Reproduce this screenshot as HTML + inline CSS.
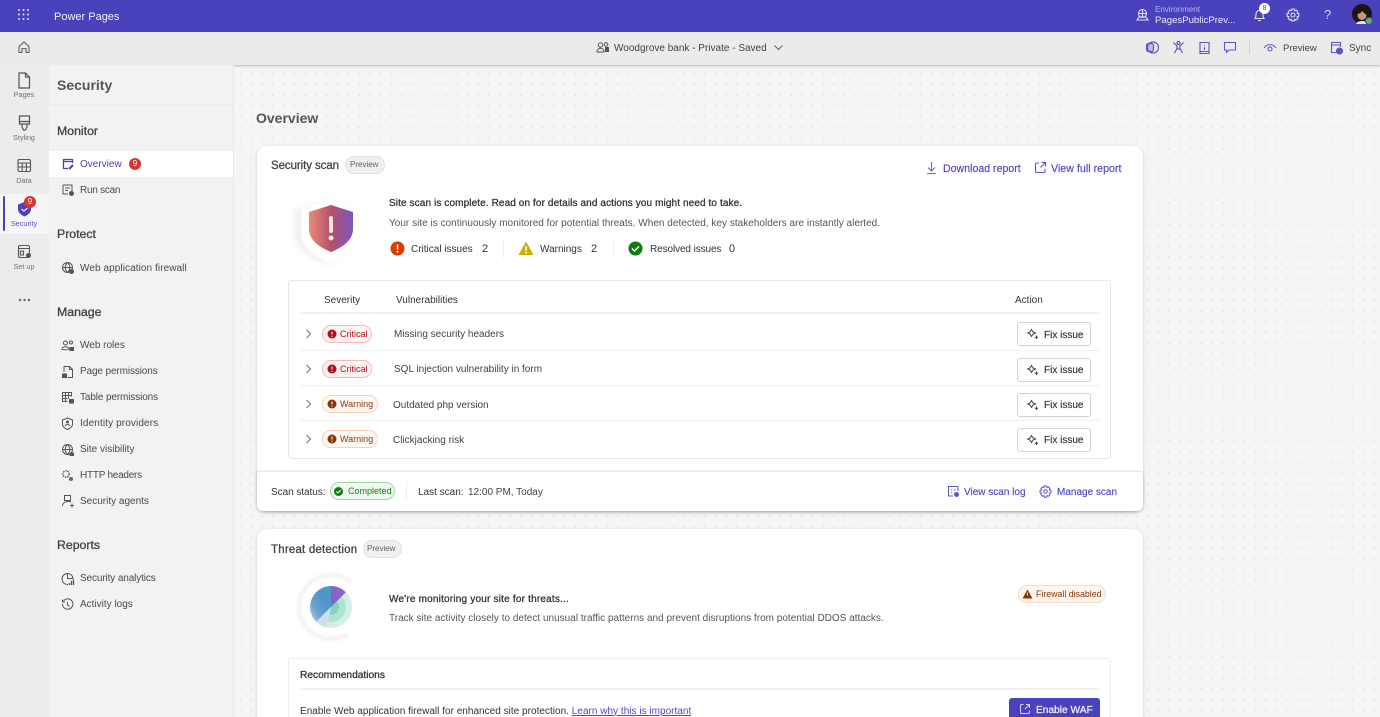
<!DOCTYPE html>
<html lang="en"><head><meta charset="utf-8"><title>Power Pages - Security</title>
<style>
*{box-sizing:border-box}
html,body{margin:0;padding:0;width:1380px;height:717px;overflow:hidden;background:#f5f5f5;font-family:"Liberation Sans",sans-serif;color:#424242}
#r{position:absolute;left:0;top:0;width:1380px;height:717px;overflow:hidden;filter:blur(.35px)}
.a,.t{position:absolute}
.t{white-space:nowrap;font-size:10px;line-height:14px;height:14px;color:#424242}
.b{font-weight:bold}
.sb{-webkit-text-stroke:.28px currentColor}
.nav{font-size:10px;color:#4a4a4a}
.h{font-size:12.3px;color:#424242;-webkit-text-stroke:.3px #424242}
.rail{font-size:7.3px;color:#707070;text-align:center;width:48px;left:0}
.link{color:#4f46c8;font-size:10px;-webkit-text-stroke:.15px #4f46c8}
svg{position:absolute;overflow:visible}
.pill{position:absolute;border-radius:9px;border:1px solid;height:18px}
.btn{position:absolute;left:1017px;width:74px;height:24px;background:#fff;border:1px solid #d1d1d1;border-radius:3px}
.sep{position:absolute;height:1px;background:#f0f0f0;left:300px;width:800px}
</style></head><body><div id="r">
<!-- dotted canvas -->
<div class="a" style="left:234px;top:66px;width:1146px;height:651px;background-color:#f5f5f5;background-image:radial-gradient(circle,#e2e5f3 0.9px,transparent 1.2px);background-size:10.8px 10.8px;background-position:1px 2px"></div>
<!-- top bar -->
<div class="a" style="left:0;top:0;width:1380px;height:32px;background:#4a41bd"></div>
<svg style="left:17px;top:8px" width="14" height="14" fill="#e6e4f7"><circle cx="2" cy="2" r="1"/><circle cx="6.500" cy="2" r="1"/><circle cx="11" cy="2" r="1"/><circle cx="2" cy="6.500" r="1"/><circle cx="6.500" cy="6.500" r="1"/><circle cx="11" cy="6.500" r="1"/><circle cx="2" cy="11" r="1"/><circle cx="6.500" cy="11" r="1"/><circle cx="11" cy="11" r="1"/></svg>
<div class="t" style="left:54px;top:9.500px;font-size:11px;color:#f2f1fb">Power Pages</div>
<svg style="left:1136px;top:8px" width="14" height="14" fill="none" stroke="#e6e4f7" stroke-width="1.100"><circle cx="6.500" cy="5.500" r="4"/><path d="M2.500 5.500h8M6.500 1.500v8M1 12l2-3h7l2 3z"/></svg>
<div class="t" style="left:1155px;top:3px;font-size:8px;color:#b9b5e8">Environment</div>
<div class="t" style="left:1155px;top:14px;font-size:9.600px;color:#ebeafa">PagesPublicPrev...</div>
<svg style="left:1253px;top:8px" width="14" height="14" fill="none" stroke="#e6e4f7" stroke-width="1.100"><path d="M2 10.500c1-1 1-2 1-4.500a3.500 3.500 0 0 1 7 0c0 2.500 0 3.500 1 4.500zM5 12.500h3"/></svg>
<div class="a" style="left:1259px;top:3px;width:11px;height:11px;border-radius:50%;background:#fff;color:#4a41bd;font-size:7px;line-height:11px;text-align:center">8</div>
<svg style="left:1286px;top:8px" width="14" height="14" fill="none" stroke="#e6e4f7" stroke-width="1.100"><circle cx="7" cy="7" r="2"/><path d="M5.800 1h2.400l.4 1.700 1.600-.7 1.700 1.700-.8 1.500 1.700.6v2.400l-1.700.6.800 1.500-1.700 1.700-1.600-.7-.4 1.700H5.800l-.4-1.700-1.600.7-1.700-1.700.8-1.500-1.700-.6V5.800l1.700-.6-.8-1.500L3.800 2l1.600.7z"/></svg>
<div class="t" style="left:1324px;top:7px;font-size:13px;line-height:16px;height:16px;color:#d9d6f3">?</div>
<svg style="left:1352px;top:4px" width="22" height="22"><circle cx="10" cy="10" r="10" fill="#1d1512"/><ellipse cx="10" cy="11" rx="4.500" ry="5" fill="#c99378"/><path d="M4 10c0-6 5-7 8-6s4 4 3 7c-2-1-4-3-5-4-1 2-3 3-6 3z" fill="#1d1512"/><path d="M4 20c1-4 11-4 12 0z" fill="#e8e0dc"/><circle cx="17" cy="17" r="3.500" fill="#5cb84f" stroke="#4a41bd"/></svg>
<!-- command bar -->
<div class="a" style="left:0;top:32px;width:1380px;height:33px;background:#edebe9;box-shadow:0 1px 2px rgba(0,0,0,.25)"></div>
<svg style="left:17px;top:40px" width="14" height="14" fill="none" stroke="#616161" stroke-width="1.100"><path d="M2 6.500 7 2l5 4.500V12.500H9V8.500H5v4H2z"/></svg>
<svg style="left:596px;top:41px" width="14" height="13" fill="none" stroke="#555" stroke-width="1"><circle cx="4.500" cy="4" r="2.200"/><path d="M1 11c0-5 7-5 7 0z"/><circle cx="10" cy="3.500" r="1.800"/><path d="M9.500 6.500h3v4h-3z" fill="#555"/></svg>
<div class="t" style="left:614px;top:42px;color:#424242">Woodgrove bank - Private - Saved</div>
<svg style="left:773px;top:44px" width="11" height="8" fill="none" stroke="#616161"><path d="M1.500 1.500 5.500 5.500 9.500 1.500"/></svg>
<svg style="left:1145px;top:40px" width="15" height="15" fill="none" stroke="#5b55c9" stroke-width="1.200"><circle cx="8" cy="7.500" r="5.500"/><rect x="1.500" y="3.500" width="7" height="8" rx="2" fill="#5b55c9" fill-opacity=".3"/></svg>
<svg style="left:1172px;top:40px" width="14" height="15" fill="none" stroke="#5b55c9" stroke-width="1.200"><circle cx="6.500" cy="3" r="1.500"/><path d="M1.500 2.500 5 6v2.500L2.500 13M11.500 2.500 8 6v2.500l2.500 4.500M5 9h3"/></svg>
<svg style="left:1198px;top:41px" width="13" height="14" fill="none" stroke="#5b55c9" stroke-width="1.100"><path d="M2 1.500h9v11H2zM2 10.500h9M6.500 4v.8M6.500 6v3"/></svg>
<svg style="left:1223px;top:41px" width="14" height="13" fill="none" stroke="#5b55c9" stroke-width="1.100"><path d="M1.500 1.500h11v7.500H6L3.500 11.500V9h-2z"/></svg>
<div class="a" style="left:1249px;top:41px;width:1px;height:13px;background:#d1d1d1"></div>
<svg style="left:1263px;top:42px" width="14" height="11" fill="none" stroke="#5b55c9" stroke-width="1.100"><path d="M1 6C4 1.500 10 1.500 13 6"/><circle cx="7" cy="7" r="2"/></svg>
<div class="t" style="left:1283px;top:42px;font-size:9.500px;color:#424242">Preview</div>
<svg style="left:1330px;top:41px" width="14" height="14" fill="none" stroke="#5b55c9" stroke-width="1.100"><path d="M7 11.500H1.500V1.500h9V6M1.500 4h9"/><circle cx="9.500" cy="10" r="3" fill="#5b55c9"/></svg>
<div class="t" style="left:1349px;top:42px;color:#424242">Sync</div>
<!-- rail -->
<div class="a" style="left:0;top:65px;width:49px;height:652px;background:#ececec"></div>
<div class="a" style="left:0;top:194px;width:49px;height:40px;background:#f5f5f5"></div>
<div class="a" style="left:3px;top:196px;width:2px;height:35px;background:#4a41bd;border-radius:1px"></div>
<svg style="left:17px;top:72px" width="14" height="17" fill="none" stroke="#555" stroke-width="1.200"><path d="M2 1h6.500L12.500 5v11H2zM8.500 1v4h4"/></svg>
<div class="t rail" style="top:88px">Pages</div>
<svg style="left:18px;top:115px" width="13" height="16" fill="none" stroke="#555" stroke-width="1.200"><path d="M1.500 1h10v8h-10zM1.500 6.500h10M4 9h5v3l-1.500 3h-2L4 12z"/></svg>
<div class="t rail" style="top:131px">Styling</div>
<svg style="left:17px;top:158px" width="15" height="15" fill="none" stroke="#555" stroke-width="1.100"><rect x="1" y="1.500" width="12.500" height="12" rx="1.500"/><path d="M1 5h12.500M1 9h12.500M5.200 5v8.500M9.400 5v8.500"/></svg>
<div class="t rail" style="top:174px">Data</div>
<svg style="left:17px;top:201px" width="15" height="16"><path d="M7.500 1 14 3.500v4.500c0 3.500-3 6-6.500 7.500C4 14 1 11.500 1 8V3.500z" fill="#4a41bd"/><path d="M4.500 8 7 10l3.500-3" stroke="#fff" fill="none" stroke-width="1.100"/></svg>
<div class="a" style="left:24px;top:196px;width:12px;height:12px;border-radius:50%;background:#d13a2e;color:#fff;font-size:8px;line-height:12px;text-align:center">9</div>
<div class="t rail" style="top:217px;color:#5b55c9">Security</div>
<svg style="left:17px;top:244px" width="15" height="16" fill="none" stroke="#555" stroke-width="1.100"><rect x="1.500" y="1.500" width="11" height="12" rx="1.500"/><path d="M1.500 4.500h11M3.500 7h3v4h-3z"/><circle cx="11.500" cy="11.500" r="2.500" fill="#555" stroke="none"/></svg>
<div class="t rail" style="top:260px">Set up</div>
<svg style="left:18px;top:298px" width="13" height="4" fill="#666"><circle cx="2" cy="2" r="1.200"/><circle cx="6.500" cy="2" r="1.200"/><circle cx="11" cy="2" r="1.200"/></svg>
<!-- left panel -->
<div class="a" style="left:49px;top:65px;width:184px;height:652px;background:#f2f2f2"></div>
<div class="a" style="left:233px;top:65px;width:1px;height:652px;background:#e6e6e6"></div>
<div class="a" style="left:49px;top:104px;width:184px;height:2px;background:#ebebeb"></div>
<div class="t b" style="left:57px;top:76px;font-size:14px;line-height:18px;height:18px;color:#555">Security</div>
<div class="t h" style="left:57px;top:124px">Monitor</div>
<div class="a" style="left:49px;top:151px;width:184px;height:26px;background:#fff"></div>
<svg style="left:61px;top:157px" width="14" height="14" fill="none" stroke="#4a41bd" stroke-width="1.300"><path d="M11.500 6V2.500H2.500v9H7M2.500 4.500h9"/><path d="M8 12l4-4" stroke-width="2"/></svg>
<div class="t" style="left:80px;top:158px;color:#4a41bd">Overview</div>
<div class="a" style="left:129px;top:158px;width:12px;height:12px;border-radius:50%;background:#d13a2e;color:#fff;font-size:8px;line-height:12px;text-align:center">9</div>
<svg style="left:61px;top:183px" width="14" height="14" fill="none" stroke="#555"><path d="M2 2h9v8M2 2v9h5M4 5h5M4 7.500h3"/><circle cx="10.500" cy="10.500" r="2.500" fill="#555" stroke="none"/></svg>
<div class="t nav" style="left:80px;top:184px;letter-spacing:-.25px">Run scan</div>
<div class="t h" style="left:57px;top:227px">Protect</div>
<svg style="left:61px;top:261px" width="14" height="14" fill="none" stroke="#555"><circle cx="6.500" cy="6.500" r="5"/><path d="M1.500 6.500h10M6.500 1.500c-3 3-3 7 0 10M6.500 1.500c3 3 3 7 0 10"/><circle cx="10.500" cy="10.500" r="2.500" fill="#555" stroke="none"/></svg>
<div class="t nav" style="left:80px;top:262px;letter-spacing:.08px">Web application firewall</div>
<div class="t h" style="left:57px;top:305px">Manage</div>
<svg style="left:61px;top:339px" width="14" height="14" fill="none" stroke="#555"><circle cx="4.500" cy="4" r="2"/><path d="M1 10c0-3 7-3 7 0 0 1-7 1-7 0z"/><circle cx="10" cy="3.500" r="1.500"/><rect x="8.500" y="8" width="4.500" height="4" fill="#555" stroke="none"/></svg>
<div class="t nav" style="left:80px;top:339px">Web roles</div>
<svg style="left:61px;top:365px" width="14" height="14" fill="none" stroke="#555"><path d="M3 7V1.500h5.500l3 3V12.500H7M8.500 1.500v3h3"/><rect x="1" y="8.500" width="5" height="4.500" fill="#555" stroke="none"/></svg>
<div class="t nav" style="left:80px;top:365px;letter-spacing:-.12px">Page permissions</div>
<svg style="left:61px;top:391px" width="14" height="14" fill="none" stroke="#555"><path d="M1.500 1.500h9v4M1.500 1.500v9h5M1.500 4.500h9M1.500 7.500h5M4.500 1.500v9M7.500 1.500v6"/><rect x="8" y="8" width="5" height="4.500" fill="#555" stroke="none"/></svg>
<div class="t nav" style="left:80px;top:391px;letter-spacing:-.12px">Table permissions</div>
<svg style="left:61px;top:417px" width="14" height="14" fill="none" stroke="#555"><path d="M6.500 1 11.500 3v4c0 3-2.500 4.500-5 5.500-2.500-1-5-2.500-5-5.500V3z"/><circle cx="6.500" cy="5" r="1.500" fill="#555" stroke="none"/><path d="M4 9c1-2 4-2 5 0"/></svg>
<div class="t nav" style="left:80px;top:417px;letter-spacing:.12px">Identity providers</div>
<svg style="left:61px;top:443px" width="14" height="14" fill="none" stroke="#555"><circle cx="6.500" cy="6.500" r="5"/><path d="M1.500 6.500h10M6.500 1.500c-3 3-3 7 0 10M6.500 1.500c3 3 3 7 0 10"/><rect x="8.500" y="9.500" width="4.500" height="3.500" fill="#555" stroke="none"/></svg>
<div class="t nav" style="left:80px;top:443px">Site visibility</div>
<svg style="left:61px;top:469px" width="14" height="14" fill="none" stroke="#666"><circle cx="5" cy="5" r="3.200" stroke-dasharray="1.500 .8" stroke-width="1.500"/><circle cx="10" cy="10" r="2" fill="#666" stroke="none"/></svg>
<div class="t nav" style="left:80px;top:469px;letter-spacing:-.25px">HTTP headers</div>
<svg style="left:61px;top:494px" width="14" height="14" fill="none" stroke="#555"><path d="M3.500 1.500h6v5h-6zM1.500 12c0-4 5-5.500 8.500-4"/><path d="M11 9.500v4M9 11.500h4"/></svg>
<div class="t nav" style="left:80px;top:495px">Security agents</div>
<div class="t h" style="left:57px;top:538px">Reports</div>
<svg style="left:61px;top:572px" width="14" height="14" fill="none" stroke="#555"><path d="M7 12.500A5.500 5.500 0 1 1 12 6.500H6.500V1"/><path d="M8.500 13V11M10.500 13V9M12.500 13V7.500" stroke-width="1.300"/></svg>
<div class="t nav" style="left:80px;top:572px;letter-spacing:-.12px">Security analytics</div>
<svg style="left:61px;top:598px" width="14" height="14" fill="none" stroke="#555"><path d="M2.500 3a5.200 5.200 0 1 1-1 3M1.500 1.500V4h2.500M6.500 4v3l2 1.500"/></svg>
<div class="t nav" style="left:80px;top:598px">Activity logs</div>
<!-- main -->
<div class="t b" style="left:256px;top:109px;font-size:14px;line-height:18px;height:18px;color:#555">Overview</div>
<!-- card 1 -->
<div class="a" style="left:257px;top:146px;width:886px;height:365px;background:#fff;border-radius:10px;box-shadow:0 1px 3px rgba(0,0,0,.18)"></div>
<div class="t sb" style="left:271px;top:159px;font-size:11.500px;letter-spacing:-.08px;color:#424242">Security scan</div>
<div class="pill" style="left:345px;top:156px;width:40px;background:#f0f0f0;border-color:#e0e0e0"></div>
<div class="t" style="left:350px;top:158px;font-size:8px;color:#616161">Preview</div>
<svg style="left:926px;top:161px" width="11" height="14" fill="none" stroke="#6b65d0" stroke-width="1.100"><path d="M5.500 1v9M2 6.500l3.500 3.500L9 6.500M1 12.500h9"/></svg>
<div class="t link" style="left:943px;top:162px;font-size:10.600px">Download report</div>
<svg style="left:1034px;top:161px" width="13" height="13" fill="none" stroke="#5b55c9" stroke-width="1.100"><path d="M5 2H2.500a1 1 0 0 0-1 1v7.500a1 1 0 0 0 1 1H10a1 1 0 0 0 1-1V8M7.500 1.500h4v4M11.500 1.500 6.500 6.500"/></svg>
<div class="t link" style="left:1051px;top:162px;font-size:10.700px">View full report</div>
<!-- shield -->
<svg style="left:290px;top:196px" width="76" height="76"><defs><linearGradient id="sg" x1="0" y1="0" x2="1" y2="0"><stop offset="0" stop-color="#e88d75"/><stop offset=".5" stop-color="#b4506c"/><stop offset="1" stop-color="#7d57c2"/></linearGradient><filter id="sb"><feGaussianBlur stdDeviation="3"/></filter><filter id="sw"><feGaussianBlur stdDeviation="1"/></filter></defs><path d="M38 4 66 14v24c0 15-14 25-29 30C22 63 5 53 5 38V14z" fill="#dedede" fill-opacity=".5" filter="url(#sb)"/><path d="M41 3 70 13v24c0 15-14 25-29 30C26 62 11 52 11 37V13z" fill="#fff" filter="url(#sw)"/><path d="M41 9 63 16V33c0 12-12 19-22 23C31 52 19 45 19 33V16z" fill="url(#sg)"/><rect x="39" y="20" width="4" height="17" rx="2" fill="#f8e4e4"/><circle cx="41" cy="42" r="2.500" fill="#f8e4e4"/></svg>
<div class="t sb" style="left:389px;top:197px;color:#333;letter-spacing:.11px">Site scan is complete. Read on for details and actions you might need to take.</div>
<div class="t" style="left:389px;top:216.500px;color:#555;letter-spacing:.02px">Your site is continuously monitored for potential threats. When detected, key stakeholders are instantly alerted.</div>
<svg style="left:390px;top:241px" width="15" height="15"><circle cx="7.500" cy="7.500" r="7" fill="#d83b01"/><path d="M7.500 3.500v5" stroke="#fff" stroke-width="1.500"/><circle cx="7.500" cy="10.800" r="1" fill="#fff"/></svg>
<div class="t" style="left:411px;top:242.500px;color:#333">Critical issues</div>
<div class="t" style="left:482px;top:242px;font-size:11px;color:#333">2</div>
<div class="a" style="left:503px;top:239px;width:1px;height:19px;background:#eee"></div>
<svg style="left:518px;top:241px" width="16" height="15"><path d="M8 .5 15.500 14H.5z" fill="#c4b000"/><path d="M8 5v5" stroke="#fff" stroke-width="1.400"/><circle cx="8" cy="11.800" r=".9" fill="#fff"/></svg>
<div class="t" style="left:540px;top:242.500px;color:#333">Warnings</div>
<div class="t" style="left:591px;top:242px;font-size:11px;color:#333">2</div>
<div class="a" style="left:613px;top:239px;width:1px;height:19px;background:#eee"></div>
<svg style="left:628px;top:241px" width="15" height="15"><circle cx="7.500" cy="7.500" r="7" fill="#107c10"/><path d="M4 7.500l2.500 2.500 4.500-4.500" fill="none" stroke="#fff" stroke-width="1.400"/></svg>
<div class="t" style="left:650px;top:242.500px;color:#333;letter-spacing:-.1px">Resolved issues</div>
<div class="t" style="left:729px;top:242px;font-size:11px;color:#333">0</div>
<!-- table -->
<div class="a" style="left:288px;top:280px;width:823px;height:179px;border:1px solid #e8e8e8;border-radius:3px;background:#fff"></div>
<div class="t" style="left:324px;top:293.500px;color:#333">Severity</div>
<div class="t" style="left:396px;top:293.500px;color:#333">Vulnerabilities</div>
<div class="t" style="left:1015px;top:293.500px;color:#333">Action</div>
<div class="sep" style="top:312px;height:2px"></div>
<div class="sep" style="top:350px"></div>
<div class="sep" style="top:385px"></div>
<div class="sep" style="top:420px"></div>
<svg style="left:305px;top:329px" width="7" height="10" fill="none" stroke="#707070"><path d="M1.500 1 5.500 5 1.500 9"/></svg>
<svg style="left:305px;top:364px" width="7" height="10" fill="none" stroke="#707070"><path d="M1.500 1 5.500 5 1.500 9"/></svg>
<svg style="left:305px;top:399px" width="7" height="10" fill="none" stroke="#707070"><path d="M1.500 1 5.500 5 1.500 9"/></svg>
<svg style="left:305px;top:434px" width="7" height="10" fill="none" stroke="#707070"><path d="M1.500 1 5.500 5 1.500 9"/></svg>
<div class="pill" style="left:322px;top:325px;width:50px;background:#fdf3f4;border-color:#f1bbbc"></div>
<svg style="left:327px;top:329px" width="10" height="10"><circle cx="5" cy="5" r="4.500" fill="#b10e1c"/><path d="M5 2.500v3" stroke="#fff"/><circle cx="5" cy="7.200" r=".6" fill="#fff"/></svg>
<div class="t" style="left:340px;top:327px;font-size:9px;color:#b10e1c">Critical</div>
<div class="pill" style="left:322px;top:360px;width:50px;background:#fdf3f4;border-color:#f1bbbc"></div>
<svg style="left:327px;top:364px" width="10" height="10"><circle cx="5" cy="5" r="4.500" fill="#b10e1c"/><path d="M5 2.500v3" stroke="#fff"/><circle cx="5" cy="7.200" r=".6" fill="#fff"/></svg>
<div class="t" style="left:340px;top:362px;font-size:9px;color:#b10e1c">Critical</div>
<div class="pill" style="left:322px;top:395px;width:56px;background:#fff9f5;border-color:#fdcfb4"></div>
<svg style="left:327px;top:399px" width="10" height="10"><circle cx="5" cy="5" r="4.500" fill="#8a3707"/><path d="M5 2.500v3" stroke="#fff"/><circle cx="5" cy="7.200" r=".6" fill="#fff"/></svg>
<div class="t" style="left:340px;top:397px;font-size:9px;color:#8a3707">Warning</div>
<div class="pill" style="left:322px;top:430px;width:56px;background:#fff9f5;border-color:#fdcfb4"></div>
<svg style="left:327px;top:434px" width="10" height="10"><circle cx="5" cy="5" r="4.500" fill="#8a3707"/><path d="M5 2.500v3" stroke="#fff"/><circle cx="5" cy="7.200" r=".6" fill="#fff"/></svg>
<div class="t" style="left:340px;top:432px;font-size:9px;color:#8a3707">Warning</div>
<div class="t" style="left:394px;top:328px;color:#424242">Missing security headers</div>
<div class="t" style="left:394px;top:363px;color:#424242">SQL injection vulnerability in form</div>
<div class="t" style="left:393px;top:399px;color:#424242">Outdated php version</div>
<div class="t" style="left:393px;top:434px;color:#424242">Clickjacking risk</div>
<div class="btn" style="top:322px"></div><div class="btn" style="top:358px"></div><div class="btn" style="top:393px"></div><div class="btn" style="top:428px"></div>
<svg style="left:1027px;top:328px" width="12" height="12" fill="none" stroke="#424242"><path d="M4.500 1.500 6 4 8.500 5 6 6 4.500 8.500 3 6 .8 5 3 4z"/><path d="M9.500 7.500v3.500M7.800 9.300h3.400"/></svg>
<svg style="left:1027px;top:364px" width="12" height="12" fill="none" stroke="#424242"><path d="M4.500 1.500 6 4 8.500 5 6 6 4.500 8.500 3 6 .8 5 3 4z"/><path d="M9.500 7.500v3.500M7.800 9.300h3.400"/></svg>
<svg style="left:1027px;top:399px" width="12" height="12" fill="none" stroke="#424242"><path d="M4.500 1.500 6 4 8.500 5 6 6 4.500 8.500 3 6 .8 5 3 4z"/><path d="M9.500 7.500v3.500M7.800 9.300h3.400"/></svg>
<svg style="left:1027px;top:434px" width="12" height="12" fill="none" stroke="#424242"><path d="M4.500 1.500 6 4 8.500 5 6 6 4.500 8.500 3 6 .8 5 3 4z"/><path d="M9.500 7.500v3.500M7.800 9.300h3.400"/></svg>
<div class="t" style="left:1044px;top:328.500px;color:#333;-webkit-text-stroke:.15px #333">Fix issue</div>
<div class="t" style="left:1044px;top:363.500px;color:#333;-webkit-text-stroke:.15px #333">Fix issue</div>
<div class="t" style="left:1044px;top:398.500px;color:#333;-webkit-text-stroke:.15px #333">Fix issue</div>
<div class="t" style="left:1044px;top:433.500px;color:#333;-webkit-text-stroke:.15px #333">Fix issue</div>
<!-- footer of card -->
<div class="a" style="left:257px;top:471px;width:886px;height:40px;background:#fff;border-top:1px solid #e6e6e6;border-radius:0 4px 6px 6px;box-shadow:0 1px 3px rgba(0,0,0,.22)"></div>
<div class="t" style="left:271px;top:486px;color:#333;letter-spacing:-.05px">Scan status:</div>
<div class="pill" style="left:330px;top:482px;width:65px;background:#f1faf1;border-color:#9fd89f"></div>
<svg style="left:334px;top:487px" width="9" height="9"><circle cx="4.500" cy="4.500" r="4.500" fill="#107c10"/><path d="M2.300 4.500l1.500 1.500 3-3" fill="none" stroke="#fff"/></svg>
<div class="t" style="left:348px;top:484px;font-size:9px;color:#107c10">Completed</div>
<div class="a" style="left:406px;top:482px;width:1px;height:18px;background:#eee"></div>
<div class="t" style="left:418px;top:486px;color:#333">Last scan:</div>
<div class="t" style="left:468px;top:486px;color:#424242">12:00 PM, Today</div>
<svg style="left:947px;top:485px" width="13" height="13" fill="none" stroke="#5b55c9"><path d="M6 11H1.500V1.500h9.500V6M4 5h1M7 5h1.500M4 8h1"/><circle cx="9.500" cy="9.500" r="2.500" fill="#5b55c9" stroke="none"/></svg>
<div class="t link" style="left:964px;top:486px">View scan log</div>
<svg style="left:1039px;top:485px" width="13" height="13" fill="none" stroke="#5b55c9" stroke-width="1"><circle cx="6.500" cy="6.500" r="1.800"/><path d="M5.300 1h2.400l.3 1.600 1.500-.6 1.600 1.600-.7 1.400 1.600.6v2l-1.600.6.700 1.400-1.600 1.600-1.500-.6-.3 1.600H5.300l-.3-1.600-1.500.6-1.600-1.600.7-1.400L1 7.600v-2l1.600-.6-.7-1.400L3.500 2l1.500.6z"/></svg>
<div class="t link" style="left:1057px;top:486px">Manage scan</div>
<!-- card 2 -->
<div class="a" style="left:257px;top:529px;width:886px;height:200px;background:#fff;border-radius:10px;box-shadow:0 1px 3px rgba(0,0,0,.18)"></div>
<div class="t sb" style="left:271px;top:543px;font-size:11.500px;letter-spacing:.2px;color:#424242">Threat detection</div>
<div class="pill" style="left:363px;top:540px;width:39px;background:#f0f0f0;border-color:#e0e0e0"></div>
<div class="t" style="left:367px;top:542px;font-size:8px;color:#616161">Preview</div>
<svg style="left:290px;top:568px" width="72" height="72"><defs><filter id="rb"><feGaussianBlur stdDeviation="1.600"/></filter><linearGradient id="bl" x1="1" y1="0" x2="0" y2="1"><stop offset=".4" stop-color="#4f97c8"/><stop offset=".72" stop-color="#6fa6cf"/><stop offset="1" stop-color="#cdd8ee"/></linearGradient></defs>
<path d="M61.600 14.500A32 32 0 1 0 57 66.700" fill="none" stroke="#f0f0f0" stroke-width="3.500" filter="url(#rb)"/>
<circle cx="41" cy="39" r="21" fill="#d3efe6"/><circle cx="41" cy="39" r="15" fill="#aee4d1"/><circle cx="41" cy="39" r="8" fill="#82d4bb"/>
<path d="M41 39V18A21 21 0 0 0 26.200 53.800z" fill="url(#bl)"/>
<path d="M41 39V18A21 21 0 0 1 55.800 24.200z" fill="#8a63c6"/>
<path d="M41 39 26.200 53.800A21 21 0 0 0 37 59.600z" fill="#cfe0ec"/></svg>
<div class="t sb" style="left:389px;top:592.500px;color:#333;letter-spacing:.2px">We're monitoring your site for threats...</div>
<div class="t" style="left:389px;top:611.500px;color:#555;letter-spacing:.01px">Track site activity closely to detect unusual traffic patterns and prevent disruptions from potential DDOS attacks.</div>
<div class="pill" style="left:1018px;top:585px;width:88px;background:#fff5ef;border-color:#fdd8c4"></div>
<svg style="left:1022px;top:589px" width="11" height="10"><path d="M5.500 .5 10.500 9.500H.5z" fill="#8a3707"/><path d="M5.500 3.500v3" stroke="#fff" stroke-width=".8"/></svg>
<div class="t" style="left:1036px;top:587px;font-size:8.800px;color:#8a3707">Firewall disabled</div>
<div class="a" style="left:288px;top:658px;width:823px;height:70px;border:1px solid #ececec;border-radius:3px;background:#fff"></div>
<div class="t sb" style="left:300px;top:668.500px;font-size:10.200px;color:#333">Recommendations</div>
<div class="sep" style="top:688px;height:2px"></div>
<div class="t" style="left:300px;top:704.500px;color:#333;letter-spacing:.02px">Enable Web application firewall for enhanced site protection. <span style="color:#4f46c8;text-decoration:underline">Learn why this is important</span></div>
<div class="a" style="left:1009px;top:698px;width:91px;height:30px;background:#4a41bd;border-radius:3px"></div>
<svg style="left:1019px;top:703px" width="12" height="12" fill="none" stroke="#d5d2f3"><path d="M4.500 1.500H2.500a1 1 0 0 0-1 1v7a1 1 0 0 0 1 1h7a1 1 0 0 0 1-1V7.500M7 1.500h3.500v3.500M10.500 1.500 6 6"/></svg>
<div class="t sb" style="left:1036px;top:704px;color:#eeedfb;font-size:10.200px">Enable WAF</div>
</div></body></html>
